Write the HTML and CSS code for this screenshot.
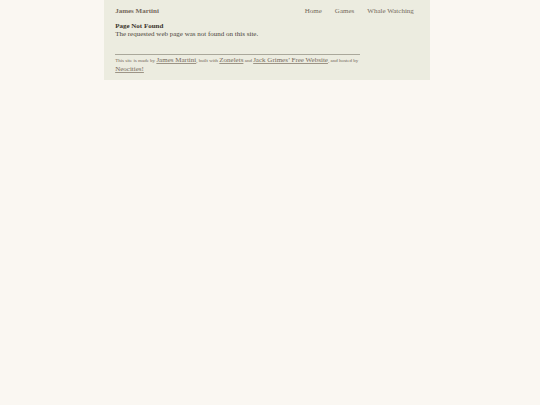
FILE: index.html
```html
<!DOCTYPE html>
<html lang="en">
<head>
<meta charset="utf-8">
<meta name="viewport" content="width=device-width, initial-scale=1">
<title>Page Not Found</title>
<link rel="stylesheet" href="styles.css">
</head>
<body>
<div class="container">
  <header class="header">
    <a class="site-name" href="#">James Martini</a>
    <nav class="nav">
      <a href="#">Home</a>
      <a href="#">Games</a>
      <a href="#">Whale Watching</a>
    </nav>
  </header>
  <main class="content">
    <h1>Page Not Found</h1>
    <p>The requested web page was not found on this site.</p>
  </main>
  <footer class="footer">
    This site is made by <a href="#">James Martini</a>, built with <a href="#">Zonelets</a> and <a href="#">Jack Grimes’ Free Website</a>, and hosted by <a href="#">Neocities!</a>
  </footer>
</div>
</body>
</html>
```
FILE: styles.css
```css
body {
  margin: 0;
  padding-right: 6px;
  background: #faf7f2;
  color: #4b453b;
  font-family: Georgia, "Liberation Serif", serif;
  font-size: 7px;
  line-height: 8px;
}

a {
  color: #75695b;
  text-decoration-color: #9c9486;
}

.container {
  box-sizing: border-box;
  width: 61%;
  margin: 0 auto;
  padding: 7px 11px 6px;
  background: #ecece0;
}

.header {
  display: flex;
  justify-content: space-between;
  margin-bottom: 7px;
  padding-right: 5px;
}

.header a {
  text-decoration: none;
}

.site-name {
  font-weight: bold;
}

.nav {
  display: flex;
  gap: 13px;
}

.content h1,
.content p {
  margin: 0;
  font-size: 7px;
}

.content h1 {
  color: #3a342b;
}

.footer {
  max-width: 245px;
  margin-top: 16px;
  padding-top: 1px;
  border-top: 1px solid #aaa89b;
  color: #75695b;
  font-size: 5px;
}

.footer a {
  font-size: 7px;
}
```
